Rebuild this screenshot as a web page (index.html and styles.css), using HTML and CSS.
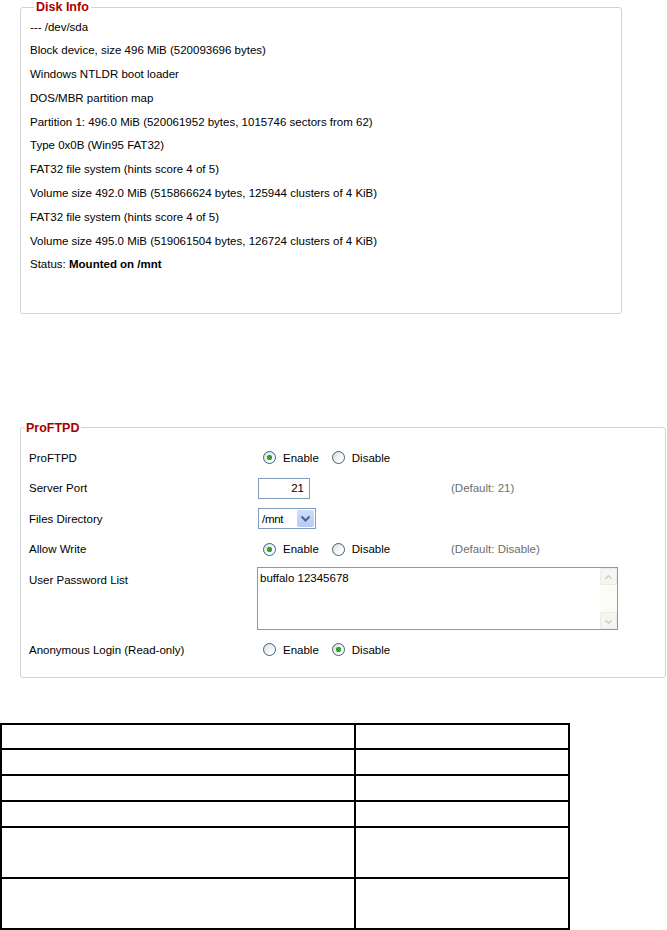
FILE: index.html
```html
<!DOCTYPE html>
<html lang="en">
<head>
    <meta charset="UTF-8">
    <title>Disk Info / ProFTPD</title>
    <link rel="stylesheet" href="styles.css">
</head>
<body>
    <fieldset class="box disk">
        <legend>Disk Info</legend>
        <div class="line">--- /dev/sda</div>
        <div class="line">Block device, size 496 MiB (520093696 bytes)</div>
        <div class="line">Windows NTLDR boot loader</div>
        <div class="line">DOS/MBR partition map</div>
        <div class="line">Partition 1: 496.0 MiB (520061952 bytes, 1015746 sectors from 62)</div>
        <div class="line">Type 0x0B (Win95 FAT32)</div>
        <div class="line">FAT32 file system (hints score 4 of 5)</div>
        <div class="line">Volume size 492.0 MiB (515866624 bytes, 125944 clusters of 4 KiB)</div>
        <div class="line">FAT32 file system (hints score 4 of 5)</div>
        <div class="line">Volume size 495.0 MiB (519061504 bytes, 126724 clusters of 4 KiB)</div>
        <div class="line">Status: <b>Mounted on /mnt</b></div>
    </fieldset>

    <fieldset class="box ftp">
        <legend>ProFTPD</legend>
        <div class="row">
            <div class="label">ProFTPD</div>
            <div class="value">
                <label class="opt"><input type="radio" class="radio" name="ftp" checked>Enable</label>
                <label class="opt"><input type="radio" class="radio" name="ftp">Disable</label>
            </div>
        </div>
        <div class="row tall">
            <div class="label">Server Port</div>
            <div class="value"><input type="text" class="port" value="21"></div>
            <div class="hint">(Default: 21)</div>
        </div>
        <div class="row">
            <div class="label">Files Directory</div>
            <div class="value">
                <div class="select">
                    <span class="select-text">/mnt</span>
                    <span class="select-btn">
                        <svg width="17" height="17" viewBox="0 0 17 17"><path d="M4.5 6.5 L8.5 10.5 L12.5 6.5" fill="none" stroke="#4d6185" stroke-width="2"/></svg>
                    </span>
                </div>
            </div>
        </div>
        <div class="row tall">
            <div class="label">Allow Write</div>
            <div class="value">
                <label class="opt"><input type="radio" class="radio" name="write" checked>Enable</label>
                <label class="opt"><input type="radio" class="radio" name="write">Disable</label>
            </div>
            <div class="hint">(Default: Disable)</div>
        </div>
        <div class="row list">
            <div class="label">User Password List</div>
            <div class="textbox">
                <div class="textbox-text">buffalo 12345678</div>
                <div class="scroll">
                    <span class="scroll-btn">
                        <svg width="17" height="17" viewBox="0 0 17 17"><path d="M5 10 L8.5 6.5 L12 10" fill="none" stroke="#cfcfc6" stroke-width="1.6"/></svg>
                    </span>
                    <span class="scroll-btn">
                        <svg width="17" height="17" viewBox="0 0 17 17"><path d="M5 7 L8.5 10.5 L12 7" fill="none" stroke="#cfcfc6" stroke-width="1.6"/></svg>
                    </span>
                </div>
            </div>
        </div>
        <div class="row">
            <div class="label">Anonymous Login (Read-only)</div>
            <div class="value">
                <label class="opt"><input type="radio" class="radio" name="anon">Enable</label>
                <label class="opt"><input type="radio" class="radio" name="anon" checked>Disable</label>
            </div>
        </div>
    </fieldset>

    <table class="grid">
        <tr class="r1"><td class="c1"></td><td class="c2"></td></tr>
        <tr class="r2"><td></td><td></td></tr>
        <tr class="r1"><td></td><td></td></tr>
        <tr class="r2"><td></td><td></td></tr>
        <tr class="r3"><td></td><td></td></tr>
        <tr class="r3"><td></td><td></td></tr>
    </table>
</body>
</html>
```

FILE: styles.css
```css
body {
    margin: 0;
    font-family: "Liberation Sans", Arial, sans-serif;
    font-size: 11.5px;
    color: #000;
    background: #fff;
}

/* fieldset boxes */
.box {
    box-sizing: border-box;
    margin: 0 0 0 20px;
    padding: 0;
    border: 1px solid #d3d3d3;
    border-radius: 3px;
    min-width: 0;
}
.box legend {
    font-size: 12.5px;
    line-height: 14px;
    font-weight: bold;
    color: #a80000;
    padding: 0 2px;
}

.disk {
    width: 602px;
    padding: 1.5px 0 35.5px 9px;
}
.disk legend {
    margin-left: 4px;
}
.line {
    line-height: 23.8px;
    white-space: nowrap;
}

.ftp {
    width: 646px;
    margin-top: 107px;
    padding: 8px 0 12px 8px;
}
.ftp legend {
    margin-left: -5px;
}

/* form rows */
.row {
    display: flex;
    align-items: center;
    height: 30px;
}
.row.tall {
    height: 31px;
}
.row.list {
    height: 70px;
    align-items: flex-start;
}
.row.list .label {
    padding-top: 8px;
    line-height: 14px;
}
.label {
    width: 229px;
    flex: none;
}
.value {
    width: 193px;
    flex: none;
    display: flex;
    align-items: center;
}
.hint {
    color: #6e6e6e;
}

.opt {
    display: inline-flex;
    align-items: center;
    margin-right: 8px;
}
.radio {
    appearance: none;
    -webkit-appearance: none;
    box-sizing: border-box;
    width: 13px;
    height: 13px;
    margin: 0 7px 0 5px;
    border: 1px solid #3c5f80;
    border-radius: 50%;
    background: linear-gradient(135deg, #dcdcd6, #ffffff 75%);
}
.radio:checked {
    background: radial-gradient(circle, #2fa52f 0, #2fa52f 2.4px, transparent 3px),
                linear-gradient(135deg, #dcdcd6, #ffffff 75%);
}

.port {
    box-sizing: border-box;
    width: 52px;
    height: 21px;
    margin: 0;
    border: 1px solid #7f9db9;
    padding: 0 5px 0 0;
    text-align: right;
    font-family: inherit;
    font-size: 11.5px;
}

.select {
    box-sizing: border-box;
    width: 58px;
    height: 21px;
    border: 1px solid #7f9db9;
    display: flex;
    align-items: center;
    justify-content: space-between;
    padding: 1px;
}
.select-text {
    padding-left: 2px;
    letter-spacing: -0.3px;
}
.select-btn {
    width: 17px;
    height: 17px;
    border-radius: 2px;
    background: linear-gradient(#cfdcfb, #b7cbf5);
    display: flex;
}

.textbox {
    box-sizing: border-box;
    width: 361px;
    height: 63px;
    margin: 2px 0 0 -1px;
    border: 1px solid #7f9db9;
    display: flex;
}
.textbox-text {
    flex: 1;
    padding: 3px 2px;
    line-height: 14px;
}
.scroll {
    width: 17px;
    background: #fbfbf7;
    display: flex;
    flex-direction: column;
    justify-content: space-between;
}
.scroll-btn {
    width: 17px;
    height: 17px;
    box-sizing: border-box;
    border: 1px solid #ecece6;
    border-radius: 2px;
    background: #f5f5f1;
    display: flex;
}

/* empty grid table */
.grid {
    margin-top: 45px;
    border-collapse: collapse;
    width: 570px;
}
.grid td {
    border: 2px solid #000;
    padding: 0;
}
.grid .c1 {
    width: 352px;
}
.r1 td {
    height: 23.5px;
}
.r2 td {
    height: 24px;
}
.r3 td {
    height: 49px;
}
```
